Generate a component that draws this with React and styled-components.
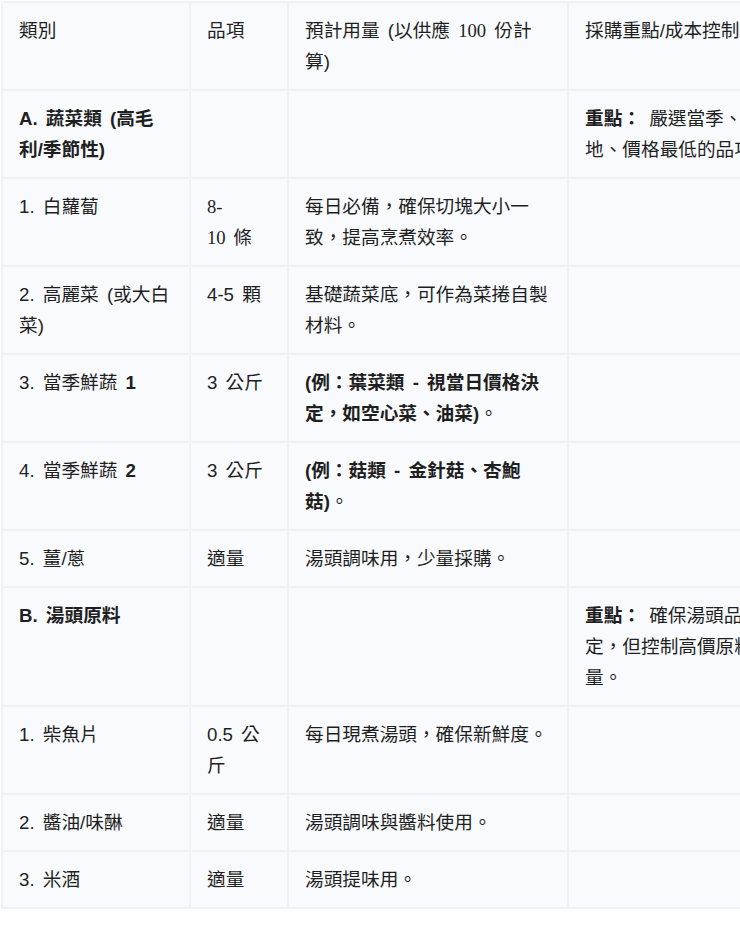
import React from 'react';
import styled, { createGlobalStyle } from 'styled-components';

const GlobalStyle = createGlobalStyle`
  html, body {
    margin: 0;
    padding: 0;
    background: #ffffff;
    overflow: hidden;
  }
`;

const Page = styled.div`
  width: 740px;
  overflow: hidden;
  padding: 1px 0 0 1px;
  box-sizing: border-box;
`;

const Table = styled.table`
  width: 827px;
  table-layout: fixed;
  border-collapse: separate;
  border-spacing: 2px;
  background: #eef1f5;
  font-family: 'Liberation Sans', 'Noto Sans CJK TC', sans-serif;
  font-size: 18.67px;
  line-height: 31px;
  word-spacing: 3px;
  color: #1f1f1f;
`;

const Col = styled.col`
  width: ${(p) => p.$w}px;
`;

const HeadCell = styled.th`
  background: #f8fafd;
  padding: 12px 16px;
  text-align: left;
  vertical-align: top;
  font-weight: 400;
`;

const Cell = styled.td`
  background: #f8fafd;
  padding: 12px 16px;
  vertical-align: top;
`;

const Strong = styled.b`
  font-weight: 700;
`;

const Serif = styled.span`
  font-family: 'Liberation Serif', 'Noto Sans CJK TC', serif;
`;

const rows = [
  {
    cat: (
      <>
        <Strong>A.</Strong> <Strong>蔬菜類 (高毛利/季節性)</Strong>
      </>
    ),
    qty: '',
    use: '',
    note: (
      <>
        <Strong>重點：</Strong> 嚴選當季、本土產地、價格最低的品項。
      </>
    )
  },
  {
    cat: '1. 白蘿蔔',
    qty: (
      <Serif>
        8-
        <br />
        10 條
      </Serif>
    ),
    use: '每日必備，確保切塊大小一致，提高烹煮效率。'
  },
  { cat: '2. 高麗菜 (或大白菜)', qty: '4-5 顆', use: '基礎蔬菜底，可作為菜捲自製材料。' },
  {
    cat: (
      <>
        3. 當季鮮蔬 <Strong>1</Strong>
      </>
    ),
    qty: '3 公斤',
    use: (
      <>
        <Strong>(例：葉菜類 - 視當日價格決定，如空心菜、油菜)</Strong>。
      </>
    )
  },
  {
    cat: (
      <>
        4. 當季鮮蔬 <Strong>2</Strong>
      </>
    ),
    qty: '3 公斤',
    use: (
      <>
        <Strong>(例：菇類 - 金針菇、杏鮑菇)</Strong>。
      </>
    )
  },
  { cat: '5. 薑/蔥', qty: <Serif>適量</Serif>, use: '湯頭調味用，少量採購。' },
  {
    cat: (
      <>
        <Strong>B.</Strong> <Strong>湯頭原料</Strong>
      </>
    ),
    qty: '',
    use: '',
    note: (
      <>
        <Strong>重點：</Strong> 確保湯頭品質穩定，但控制高價原料的用量。
      </>
    )
  },
  { cat: '1. 柴魚片', qty: '0.5 公斤', use: '每日現煮湯頭，確保新鮮度。' },
  { cat: '2. 醬油/味醂', qty: '適量', use: '湯頭調味與醬料使用。' },
  { cat: '3. 米酒', qty: '適量', use: '湯頭提味用。' }
];

export default function App() {
  return (
    <Page>
      <GlobalStyle />
      <Table>
        <colgroup>
          <Col $w={186} />
          <Col $w={96} />
          <Col $w={278} />
          <Col $w={257} />
        </colgroup>
        <thead>
          <tr>
            <HeadCell>類別</HeadCell>
            <HeadCell>品項</HeadCell>
            <HeadCell>
              預計用量 (以供應 <Serif>100</Serif> 份計算)
            </HeadCell>
            <HeadCell>採購重點/成本控制策略</HeadCell>
          </tr>
        </thead>
        <tbody>
          {rows.map((r, i) => (
            <tr key={i}>
              <Cell>{r.cat}</Cell>
              <Cell>{r.qty}</Cell>
              <Cell>{r.use}</Cell>
              <Cell>{r.note}</Cell>
            </tr>
          ))}
        </tbody>
      </Table>
    </Page>
  );
}
